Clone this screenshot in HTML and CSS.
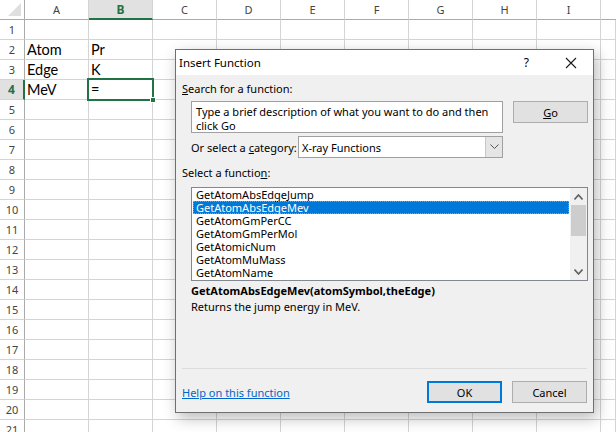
FILE: index.html
```html
<!DOCTYPE html>
<html>
<head>
<meta charset="utf-8">
<link rel="stylesheet" href="styles.css">
</head>
<body>
<div class="sheet">
  <div class="hd corner"><span class="tri"></span></div>
  <div class="hd col">A</div>
  <div class="hd col sel">B</div>
  <div class="hd col">C</div>
  <div class="hd col">D</div>
  <div class="hd col">E</div>
  <div class="hd col">F</div>
  <div class="hd col">G</div>
  <div class="hd col">H</div>
  <div class="hd col">I</div>
  <div class="hd col last"></div>

  <div class="rh">1</div><div class="c"></div><div class="c"></div><div class="c"></div><div class="c"></div><div class="c"></div><div class="c"></div><div class="c"></div><div class="c"></div><div class="c"></div><div class="c"></div>
  <div class="rh">2</div><div class="c">Atom</div><div class="c">Pr</div><div class="c"></div><div class="c"></div><div class="c"></div><div class="c"></div><div class="c"></div><div class="c"></div><div class="c"></div><div class="c"></div>
  <div class="rh">3</div><div class="c">Edge</div><div class="c">K</div><div class="c"></div><div class="c"></div><div class="c"></div><div class="c"></div><div class="c"></div><div class="c"></div><div class="c"></div><div class="c"></div>
  <div class="rh sel">4</div><div class="c">MeV</div><div class="c active">=<span class="frame"><span class="handle"></span></span></div><div class="c"></div><div class="c"></div><div class="c"></div><div class="c"></div><div class="c"></div><div class="c"></div><div class="c"></div><div class="c"></div>
  <div class="rh">5</div><div class="c"></div><div class="c"></div><div class="c"></div><div class="c"></div><div class="c"></div><div class="c"></div><div class="c"></div><div class="c"></div><div class="c"></div><div class="c"></div>
  <div class="rh">6</div><div class="c"></div><div class="c"></div><div class="c"></div><div class="c"></div><div class="c"></div><div class="c"></div><div class="c"></div><div class="c"></div><div class="c"></div><div class="c"></div>
  <div class="rh">7</div><div class="c"></div><div class="c"></div><div class="c"></div><div class="c"></div><div class="c"></div><div class="c"></div><div class="c"></div><div class="c"></div><div class="c"></div><div class="c"></div>
  <div class="rh">8</div><div class="c"></div><div class="c"></div><div class="c"></div><div class="c"></div><div class="c"></div><div class="c"></div><div class="c"></div><div class="c"></div><div class="c"></div><div class="c"></div>
  <div class="rh">9</div><div class="c"></div><div class="c"></div><div class="c"></div><div class="c"></div><div class="c"></div><div class="c"></div><div class="c"></div><div class="c"></div><div class="c"></div><div class="c"></div>
  <div class="rh">10</div><div class="c"></div><div class="c"></div><div class="c"></div><div class="c"></div><div class="c"></div><div class="c"></div><div class="c"></div><div class="c"></div><div class="c"></div><div class="c"></div>
  <div class="rh">11</div><div class="c"></div><div class="c"></div><div class="c"></div><div class="c"></div><div class="c"></div><div class="c"></div><div class="c"></div><div class="c"></div><div class="c"></div><div class="c"></div>
  <div class="rh">12</div><div class="c"></div><div class="c"></div><div class="c"></div><div class="c"></div><div class="c"></div><div class="c"></div><div class="c"></div><div class="c"></div><div class="c"></div><div class="c"></div>
  <div class="rh">13</div><div class="c"></div><div class="c"></div><div class="c"></div><div class="c"></div><div class="c"></div><div class="c"></div><div class="c"></div><div class="c"></div><div class="c"></div><div class="c"></div>
  <div class="rh">14</div><div class="c"></div><div class="c"></div><div class="c"></div><div class="c"></div><div class="c"></div><div class="c"></div><div class="c"></div><div class="c"></div><div class="c"></div><div class="c"></div>
  <div class="rh">15</div><div class="c"></div><div class="c"></div><div class="c"></div><div class="c"></div><div class="c"></div><div class="c"></div><div class="c"></div><div class="c"></div><div class="c"></div><div class="c"></div>
  <div class="rh">16</div><div class="c"></div><div class="c"></div><div class="c"></div><div class="c"></div><div class="c"></div><div class="c"></div><div class="c"></div><div class="c"></div><div class="c"></div><div class="c"></div>
  <div class="rh">17</div><div class="c"></div><div class="c"></div><div class="c"></div><div class="c"></div><div class="c"></div><div class="c"></div><div class="c"></div><div class="c"></div><div class="c"></div><div class="c"></div>
  <div class="rh">18</div><div class="c"></div><div class="c"></div><div class="c"></div><div class="c"></div><div class="c"></div><div class="c"></div><div class="c"></div><div class="c"></div><div class="c"></div><div class="c"></div>
  <div class="rh">19</div><div class="c"></div><div class="c"></div><div class="c"></div><div class="c"></div><div class="c"></div><div class="c"></div><div class="c"></div><div class="c"></div><div class="c"></div><div class="c"></div>
  <div class="rh">20</div><div class="c"></div><div class="c"></div><div class="c"></div><div class="c"></div><div class="c"></div><div class="c"></div><div class="c"></div><div class="c"></div><div class="c"></div><div class="c"></div>
  <div class="rh">21</div><div class="c"></div><div class="c"></div><div class="c"></div><div class="c"></div><div class="c"></div><div class="c"></div><div class="c"></div><div class="c"></div><div class="c"></div><div class="c"></div>
</div>

<div class="dialog">
  <div class="titlebar">
    <span class="title">Insert Function</span>
    <span class="help">?</span>
    <svg class="close" width="12" height="12" viewBox="0 0 12 12"><path d="M1 1 L11 11 M11 1 L1 11" stroke="#1a1a1a" stroke-width="1.1" fill="none"/></svg>
  </div>
  <div class="body">
    <div class="label"><u>S</u>earch for a function:</div>
    <div class="search-row">
      <div class="textbox">Type a brief description of what you want to do and then click Go</div>
      <div class="btn go"><u>G</u>o</div>
    </div>
    <div class="cat-row">
      <span class="cat-label">Or select a <u>c</u>ategory:</span>
      <div class="combo">
        <span class="combo-text">X-ray Functions</span>
        <span class="combo-btn"><svg width="9" height="6" viewBox="0 0 9 6"><path d="M0.5 0.5 L4.5 4.5 L8.5 0.5" stroke="#555" stroke-width="1" fill="none"/></svg></span>
      </div>
    </div>
    <div class="label sel-label">Select a functio<u>n</u>:</div>
    <div class="listbox">
      <div class="items">
        <div class="item">GetAtomAbsEdgeJump</div>
        <div class="item selected">GetAtomAbsEdgeMev</div>
        <div class="item">GetAtomGmPerCC</div>
        <div class="item">GetAtomGmPerMol</div>
        <div class="item">GetAtomicNum</div>
        <div class="item">GetAtomMuMass</div>
        <div class="item">GetAtomName</div>
      </div>
      <div class="scrollbar">
        <span class="arrow"><svg width="9" height="6" viewBox="0 0 9 6"><path d="M0.5 5.5 L4.5 1 L8.5 5.5" stroke="#606060" stroke-width="1.6" fill="none"/></svg></span>
        <span class="thumb"></span>
        <span class="track"></span>
        <span class="arrow"><svg width="9" height="6" viewBox="0 0 9 6"><path d="M0.5 0.5 L4.5 5 L8.5 0.5" stroke="#606060" stroke-width="1.6" fill="none"/></svg></span>
      </div>
    </div>
    <div class="sig">GetAtomAbsEdgeMev(atomSymbol,theEdge)</div>
    <div class="desc">Returns the jump energy in MeV.</div>
    <div class="sep"></div>
    <div class="footer">
      <span class="link">Help on this function</span>
      <div class="btn ok">OK</div>
      <div class="btn cancel">Cancel</div>
    </div>
  </div>
</div>
</body>
</html>
```

FILE: styles.css
```css
* { box-sizing: border-box; }
html, body { margin: 0; padding: 0; }
body {
  width: 616px;
  height: 432px;
  overflow: hidden;
  background: #fff;
  position: relative;
  font-family: "Noto Sans", sans-serif;
}

/* ---------- sheet ---------- */
.sheet {
  display: grid;
  grid-template-columns: 25px repeat(9, 64px) 1fr;
  grid-auto-rows: 20px;
}
.hd {
  border-bottom: 1px solid #ababab;
  border-right: 1px solid #d4d4d4;
  font-family: "Noto Sans", sans-serif;
  font-size: 11px;
  color: #444;
  display: flex;
  align-items: center;
  justify-content: center;
}
.hd.last { border-right: none; }
.corner {
  border-right: 1px solid #ababab;
  position: relative;
}
.tri {
  position: absolute;
  right: 3px;
  bottom: 3px;
  width: 0;
  height: 0;
  border-left: 13px solid transparent;
  border-bottom: 13px solid #dfdfdf;
}
.hd.sel {
  background: #e1e1e1;
  border-bottom: 2px solid #217346;
  color: #217346;
  font-weight: bold;
  font-size: 12px;
  padding-top: 1px;
}
.rh {
  border-right: 1px solid #ababab;
  border-bottom: 1px solid #d4d4d4;
  font-size: 11px;
  color: #444;
  display: flex;
  align-items: center;
  justify-content: center;
}
.rh.sel {
  background: #e1e1e1;
  border-right: 2px solid #217346;
  color: #217346;
  font-weight: bold;
  font-size: 12px;
}
.c {
  border-right: 1px solid #d4d4d4;
  border-bottom: 1px solid #d4d4d4;
  font-family: "Lato", sans-serif;
  font-size: 14.5px;
  color: #000;
  padding-left: 2px;
  line-height: 19px;
  white-space: nowrap;
}
.c.active { position: relative; }
.frame {
  position: absolute;
  left: -2px;
  top: -2px;
  right: -2px;
  bottom: -2px;
  border: 2px solid #217346;
}
.handle {
  position: absolute;
  right: -4px;
  bottom: -4px;
  width: 6px;
  height: 6px;
  background: #217346;
  border: 1px solid #fff;
}

/* ---------- dialog ---------- */
.dialog {
  position: absolute;
  left: 175px;
  top: 49px;
  width: 419px;
  height: 364px;
  border: 1px solid #707070;
  background: #f0f0f0;
  box-shadow: 3px 5px 14px rgba(0, 0, 0, 0.28);
  font-family: "Noto Sans", sans-serif;
  font-size: 11px;
  color: #000;
}
.titlebar {
  height: 25px;
  background: #fff;
  display: flex;
  align-items: center;
  padding-left: 3px;
}
.title { flex: 1; font-size: 11.5px; }
.help { font-size: 12px; margin-right: 36px; }
.close { margin-right: 16px; }

.body {
  padding: 6px 0 0 6px;
}
.label { line-height: 16px; }
u { text-decoration: underline; text-underline-offset: 1px; }

.search-row {
  display: flex;
  margin: 4px 0 0 9px;
  gap: 10px;
  align-items: flex-start;
}
.textbox {
  width: 312px;
  height: 32px;
  background: #fff;
  border: 1px solid #a0a0a0;
  padding: 3px 4px 0;
  line-height: 13.5px;
}
.btn {
  height: 22px;
  width: 75px;
  background: #e1e1e1;
  border: 1px solid #adadad;
  display: flex;
  align-items: center;
  justify-content: center;
}
.cat-row {
  display: flex;
  align-items: center;
  margin: 3px 0 0 9px;
}
.cat-label { width: 107px; white-space: nowrap; }
.combo {
  width: 205px;
  height: 22px;
  border: 1px solid #a0a0a0;
  background: #fff;
  display: flex;
  align-items: center;
}
.combo-text { flex: 1; padding-left: 3px; }
.combo-btn {
  width: 17px;
  height: 20px;
  background: #e5e5e5;
  border-left: 1px solid #c8c8c8;
  display: flex;
  align-items: center;
  justify-content: center;
}
.sel-label { margin-top: 7px; }
.listbox {
  margin: 6px 0 0 9px;
  width: 397px;
  height: 94px;
  border: 1px solid #828790;
  background: #fff;
  display: flex;
}
.items {
  flex: 1;
  padding: 0 1px;
}
.item {
  height: 13px;
  line-height: 13px;
  padding-left: 3px;
  white-space: nowrap;
}
.item.selected {
  background: #0078d7;
  color: #fff;
  outline: 1px dotted #f08a24;
  outline-offset: -1px;
}
.scrollbar {
  width: 17px;
  background: #f0f0f0;
  display: flex;
  flex-direction: column;
}
.arrow {
  height: 17px;
  display: flex;
  align-items: center;
  justify-content: center;
}
.thumb {
  height: 31px;
  margin: 0 1px;
  background: #cdcdcd;
}
.track { flex: 1; }
.sig {
  margin: 2px 0 0 9px;
  font-weight: bold;
  line-height: 16px;
}
.desc {
  margin-left: 9px;
  line-height: 16px;
}
.sep {
  margin-top: 53px;
  height: 1px;
  width: 405px;
  background: #dcdcdc;
}
.footer {
  display: flex;
  align-items: center;
  margin-top: 12px;
  gap: 10px;
}
.link {
  flex: 1;
  color: #0066cc;
  text-decoration: underline;
}
.btn.ok {
  border: 2px solid #0078d7;
}
.btn.cancel { margin-right: 6px; }
```
